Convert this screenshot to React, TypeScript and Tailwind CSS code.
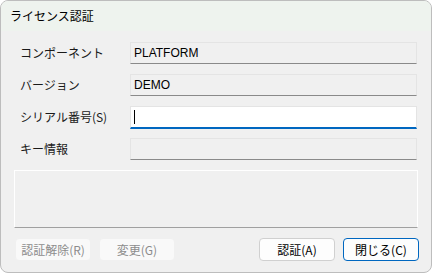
const font = { fontFamily: '"Noto Sans CJK JP", "Noto Sans", sans-serif' };

const ReadField = ({ value }: { value?: string }) => (
  <div className="h-[22px] flex-1 bg-[#f0f0f0] border border-[#e4e4e4] border-b-[#8a8a8a] flex items-center pl-[3px] text-[12px] text-black [font-family:'Liberation_Sans',sans-serif]">
    {value}
  </div>
);

const Row = ({ label, children }: any) => (
  <div className="flex items-center h-[22px]">
    <div className="w-[110px] text-[12px] text-[#1a1a1a]">{label}</div>
    {children}
  </div>
);

const Button = ({ label, disabled, primary }: any) => (
  <button
    className={
      "w-[76px] h-[23px] rounded-[4px] text-[12px] flex items-center justify-center " +
      (disabled
        ? "bg-[#f9f9f9] border border-[#f0f0f0] text-[#8c8c8c]"
        : primary
        ? "bg-[#fdfdfd] border border-[#0067c0] text-black"
        : "bg-[#fdfdfd] border border-[#d0d0d0] text-black")
    }
  >
    {label}
  </button>
);

export default function App() {
  return (
    <div className="w-[433px] h-[274px] bg-white" style={font}>
      <div className="w-[432px] h-[273px] rounded-lg border border-[#bdbdbd] bg-[#f0f0f0] overflow-hidden flex flex-col">
        <div className="h-[30px] bg-[#eef3ee] flex items-center pl-[9px] text-[12px] text-black">
          ライセンス認証
        </div>
        <div className="flex flex-col gap-[10px] pt-[11px] pl-[19px] pr-[14px]">
          <Row label="コンポーネント">
            <ReadField value="PLATFORM" />
          </Row>
          <Row label="バージョン">
            <ReadField value="DEMO" />
          </Row>
          <Row label="シリアル番号(S)">
            <div className="h-[23px] flex-1 bg-white border border-[#e4e4e4] border-b-2 border-b-[#0067c0] flex items-center pl-[3px]">
              <div className="w-px h-[14px] bg-black" />
            </div>
          </Row>
          <Row label="キー情報">
            <ReadField />
          </Row>
        </div>
        <div className="mx-[13px] mt-[10px] h-[58px] border border-[#ffffff] border-b-[#a0a0a0] border-l-[#ffffff]" />
        <div className="flex items-center justify-between pl-[14px] pr-[12px] mt-[10px]">
          <div className="flex gap-[8px]">
            <Button label="認証解除(R)" disabled />
            <Button label="変更(G)" disabled />
          </div>
          <div className="flex gap-[8px]">
            <Button label="認証(A)" />
            <Button label="閉じる(C)" primary />
          </div>
        </div>
      </div>
    </div>
  );
}
